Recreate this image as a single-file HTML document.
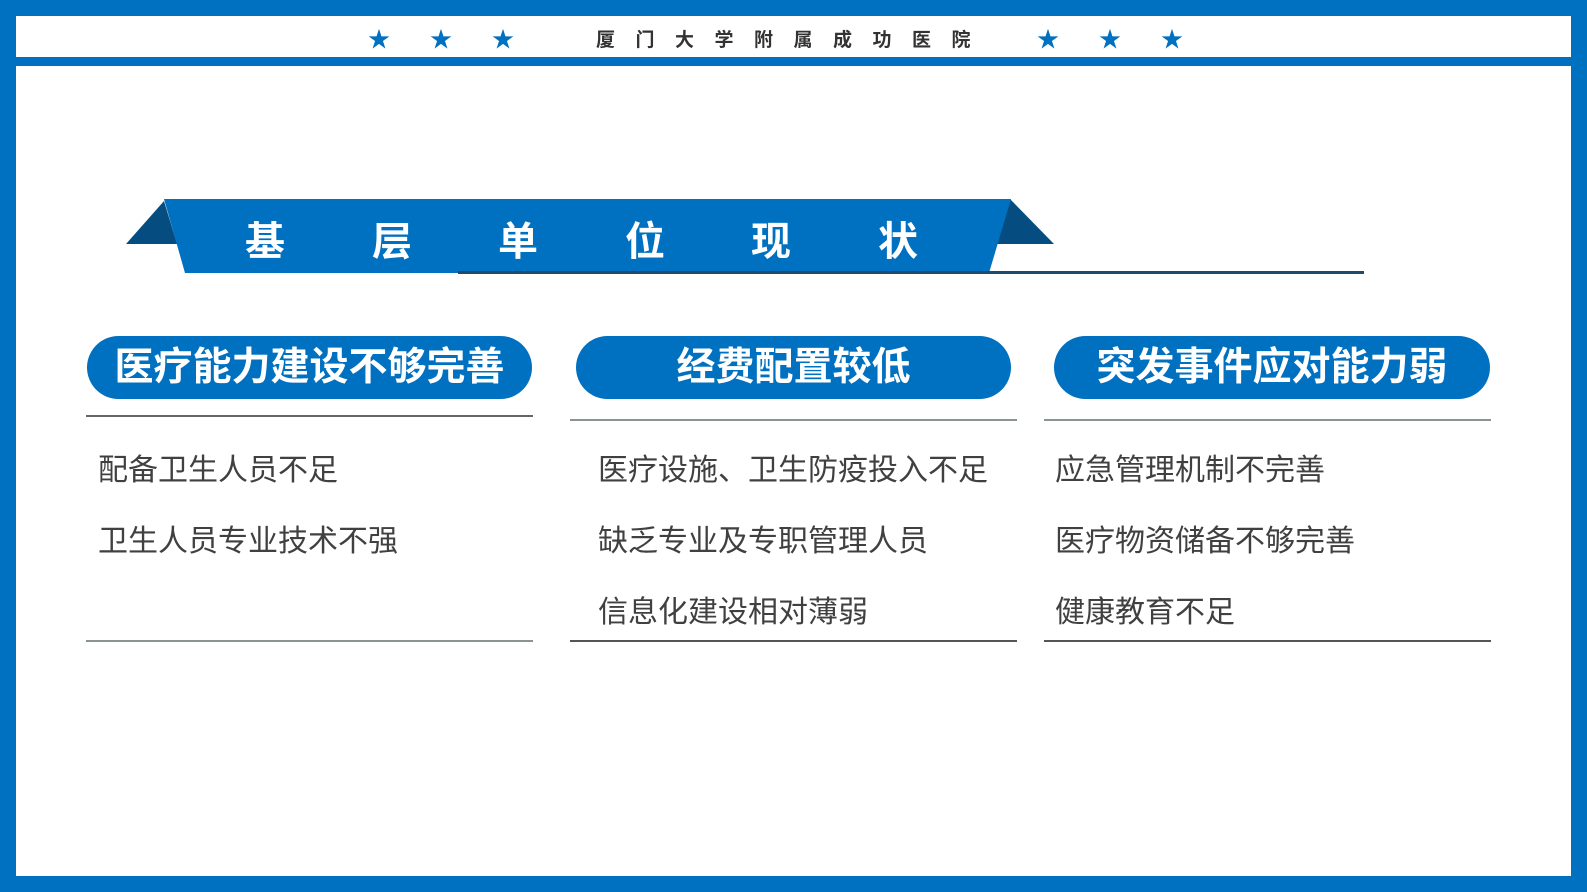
<!DOCTYPE html>
<html><head><meta charset="utf-8"><style>
*{margin:0;padding:0;box-sizing:border-box}
body{width:1587px;height:892px;position:relative;background:#0070C0;overflow:hidden;font-family:"Liberation Sans","Noto Sans CJK SC",sans-serif}
.a{position:absolute}
.hd{left:16px;top:16px;width:1555px;height:41px;background:#fff}
.main{left:16px;top:66px;width:1555px;height:810px;background:#fff}
.star{color:#0070C0;font-size:22px;top:26px;line-height:28px}
.pill{height:63px;border-radius:32px;background:#0070C0;color:#fff;font-weight:bold;font-size:39px;text-align:center;line-height:63px;top:336px}
.ln{height:2px;background:#8a9490}
.it{font-size:30px;color:#404040;line-height:40px}
.tt{color:#fff;font-weight:bold;font-size:40px;top:219px;line-height:46px}
</style></head><body>
<div class="a hd"></div>
<div class="a main"></div>
<div class="a star" style="left:368px">★</div>
<div class="a star" style="left:430px">★</div>
<div class="a star" style="left:492px">★</div>
<div class="a star" style="left:1037px">★</div>
<div class="a star" style="left:1099px">★</div>
<div class="a star" style="left:1161px">★</div>
<div class="a" style="left:596px;top:28px;font-size:19px;font-weight:bold;color:#333;letter-spacing:20.5px;line-height:26px">厦门大学附属成功医院</div>
<svg class="a" style="left:0;top:0" width="1587" height="892">
<polygon points="126,244 164,201 177,244" fill="#054D80"/>
<polygon points="1010,199 1054,244 996,244" fill="#054D80"/>
<polygon points="164,199 1011,199 989,273 185,273" fill="#0070C0"/>
<rect x="458" y="271" width="906" height="3" fill="#1F4A6A"/>
</svg>
<div class="a tt" style="left:245px">基</div>
<div class="a tt" style="left:372px">层</div>
<div class="a tt" style="left:498px">单</div>
<div class="a tt" style="left:625px">位</div>
<div class="a tt" style="left:751px">现</div>
<div class="a tt" style="left:878px">状</div>
<div class="a pill" style="left:87px;width:445px">医疗能力建设不够完善</div>
<div class="a pill" style="left:576px;width:435px">经费配置较低</div>
<div class="a pill" style="left:1054px;width:436px">突发事件应对能力弱</div>
<div class="a ln" style="left:86px;width:447px;top:415px;background:#666"></div>
<div class="a ln" style="left:570px;width:447px;top:419px"></div>
<div class="a ln" style="left:1044px;width:447px;top:419px"></div>
<div class="a ln" style="left:86px;width:447px;top:640px"></div>
<div class="a ln" style="left:570px;width:447px;top:640px;background:#555"></div>
<div class="a ln" style="left:1044px;width:447px;top:640px;background:#555"></div>
<div class="a it" style="left:98px;top:451px">配备卫生人员不足</div>
<div class="a it" style="left:98px;top:522px">卫生人员专业技术不强</div>
<div class="a it" style="left:598px;top:451px">医疗设施、卫生防疫投入不足</div>
<div class="a it" style="left:598px;top:522px">缺乏专业及专职管理人员</div>
<div class="a it" style="left:598px;top:593px">信息化建设相对薄弱</div>
<div class="a it" style="left:1055px;top:451px">应急管理机制不完善</div>
<div class="a it" style="left:1055px;top:522px">医疗物资储备不够完善</div>
<div class="a it" style="left:1055px;top:593px">健康教育不足</div>
</body></html>
